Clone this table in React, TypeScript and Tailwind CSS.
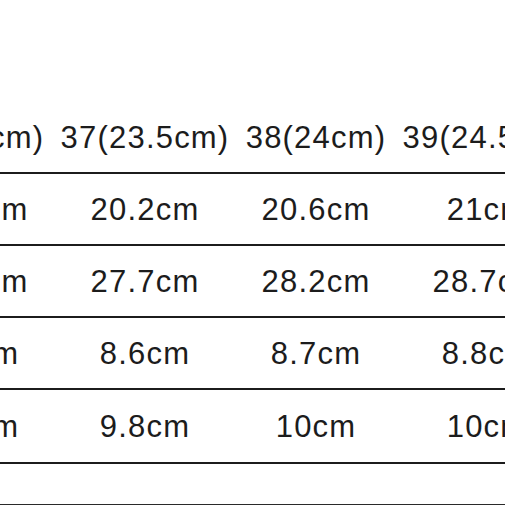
const header = ["36(23cm)", "37(23.5cm)", "38(24cm)", "39(24.5cm)"];

const rows = [
  ["19.8cm", "20.2cm", "20.6cm", "21cm"],
  ["27.2cm", "27.7cm", "28.2cm", "28.7cm"],
  ["8.5cm", "8.6cm", "8.7cm", "8.8cm"],
  ["9.6cm", "9.8cm", "10cm", "10cm"],
];

function Row({ cells, last }: { cells: string[]; last?: boolean }) {
  return (
    <div
      className={`flex items-center border-b-2 border-[#1c1c1c] ${
        last ? "h-[74px]" : "h-[72px]"
      }`}
    >
      {cells.map((c, i) => (
        <div key={i} className="w-[171px] shrink-0 pl-[1px] text-center">
          {c}
        </div>
      ))}
    </div>
  );
}

export default function App() {
  return (
    <div className="w-[505px] h-[505px] overflow-hidden bg-white text-[#1c1c1c]">
      <div className="ml-[-112px] w-[684px] pt-[102px] font-['Liberation_Sans',sans-serif] text-[31px] leading-none tracking-[1.2px]">
        <Row cells={header} />
        {rows.map((r, i) => (
          <Row key={i} cells={r} last={i === rows.length - 1} />
        ))}
        <div className="h-[41px] border-b border-[#2a2a2a]" />
      </div>
    </div>
  );
}
